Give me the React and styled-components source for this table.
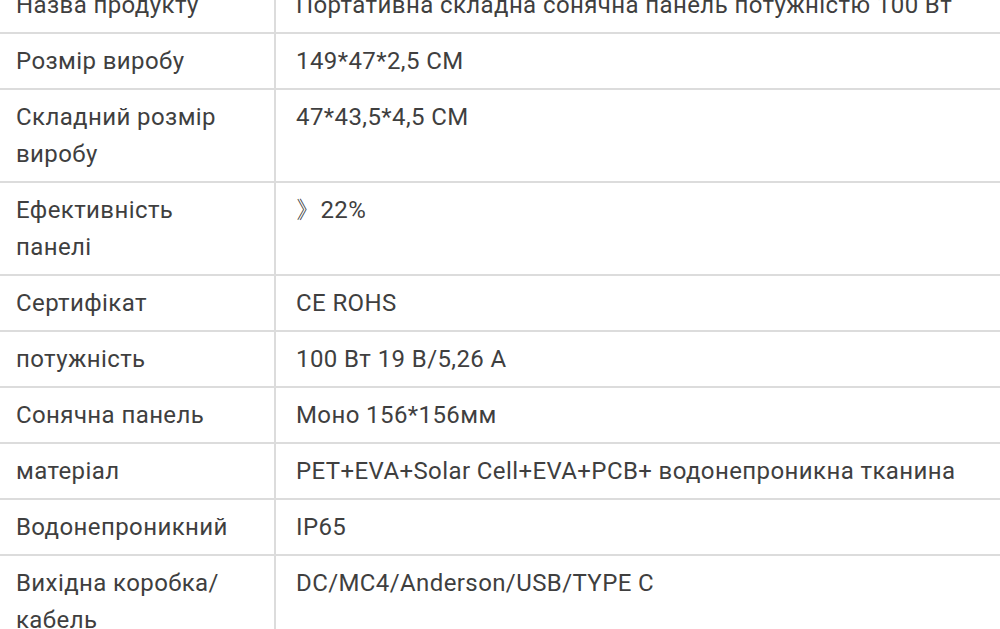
import React from "react";
import styled, { createGlobalStyle } from "styled-components";

const Global = createGlobalStyle`
  html, body { margin: 0; padding: 0; background: #ffffff; }
  body { overflow: hidden; }
`;

const Page = styled.div`
  width: 1000px;
  height: 629px;
  overflow: hidden;
  background: #fff;
`;

const Table = styled.div`
  margin-top: -22px;
  display: flex;
  flex-direction: column;
  font-family: Roboto, "Liberation Sans", Arial, sans-serif;
  font-size: 24px;
  line-height: 37px;
  letter-spacing: 0.4px;
  color: #3f3f3f;
`;

const Row = styled.div`
  display: grid;
  grid-template-columns: 276px 1fr;
  border-bottom: 2px solid #dcdcdc;
`;

const Label = styled.div`
  padding: 9px 42px 8px 16px;
  border-right: 2px solid #dcdcdc;
`;

const Value = styled.div`
  padding: 9px 16px 8px 20px;
  white-space: nowrap;
`;

const rows = [
  ["Назва продукту", "Портативна складна сонячна панель потужністю 100 Вт"],
  ["Розмір виробу", "149*47*2,5 СМ"],
  ["Складний розмір виробу", "47*43,5*4,5 СМ"],
  ["Ефективність панелі", "》22%"],
  ["Сертифікат", "CE ROHS"],
  ["потужність", "100 Вт 19 В/5,26 А"],
  ["Сонячна панель", "Моно 156*156мм"],
  ["матеріал", "PET+EVA+Solar Cell+EVA+PCB+ водонепроникна тканина"],
  ["Водонепроникний", "IP65"],
  ["Вихідна коробка/ кабель", "DC/MC4/Anderson/USB/TYPE C"],
];

export default function App() {
  return (
    <Page>
      <Global />
      <Table>
        {rows.map(([k, v]) => (
          <Row key={k}>
            <Label>{k}</Label>
            <Value>{v}</Value>
          </Row>
        ))}
      </Table>
    </Page>
  );
}
